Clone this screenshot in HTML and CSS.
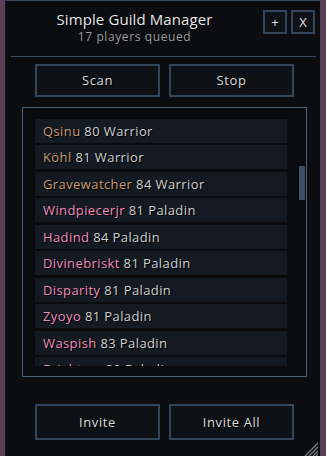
FILE: index.html
```html
<!DOCTYPE html>
<html lang="en">
<head>
	<meta charset="UTF-8">
	<title>Simple Guild Manager</title>
	<link rel="stylesheet" href="styles.css">
</head>
<body>
	<div class="window">
		<div class="header">
			<div class="titles">
				<div class="title">Simple Guild Manager</div>
				<div class="subtitle">17 players queued</div>
			</div>
			<div class="tools">
				<div class="tool">+</div>
				<div class="tool">X</div>
			</div>
		</div>
		<div class="sep"></div>
		<div class="actions top">
			<div class="btn">Scan</div>
			<div class="btn">Stop</div>
		</div>
		<div class="list">
			<div class="rows">
				<div class="row"><span class="warrior">Qsinu</span> 80 Warrior</div>
				<div class="row"><span class="warrior">Köhl</span> 81 Warrior</div>
				<div class="row"><span class="warrior">Gravewatcher</span> 84 Warrior</div>
				<div class="row"><span class="paladin">Windpiecerjr</span> 81 Paladin</div>
				<div class="row"><span class="paladin">Hadind</span> 84 Paladin</div>
				<div class="row"><span class="paladin">Divinebriskt</span> 81 Paladin</div>
				<div class="row"><span class="paladin">Disparity</span> 81 Paladin</div>
				<div class="row"><span class="paladin">Zyoyo</span> 81 Paladin</div>
				<div class="row"><span class="paladin">Waspish</span> 83 Paladin</div>
				<div class="row"><span class="paladin">Brightorr</span> 80 Paladin</div>
			</div>
			<div class="scrollbar">
				<div class="thumb"></div>
			</div>
		</div>
		<div class="actions bottom">
			<div class="btn">Invite</div>
			<div class="btn">Invite All</div>
		</div>
		<svg class="grip" width="14" height="18" viewBox="0 0 14 18">
			<line x1="1" y1="18" x2="14" y2="5" stroke="#7d7f84" stroke-width="1.3"/>
			<line x1="5" y1="18" x2="14" y2="9" stroke="#7d7f84" stroke-width="1.3"/>
			<line x1="9" y1="18" x2="14" y2="13" stroke="#7d7f84" stroke-width="1.3"/>
			<line x1="12" y1="18" x2="14" y2="16" stroke="#7d7f84" stroke-width="1.3"/>
		</svg>
	</div>
</body>
</html>
```

FILE: styles.css
```css
*{
	margin: 0;
	padding: 0;
	box-sizing: border-box;
}
body{
	background: #5b3f57;
	font-family: "Open Sans", "DejaVu Sans", sans-serif;
	color: #d6d6d6;
	overflow: hidden;
}
.window{
	position: relative;
	width: 315px;
	height: 456px;
	margin-left: 5px;
	background: #0c0d11;
	border-top: 1px solid #3a4858;
	border-left: 1px solid #17191e;
	display: flex;
	flex-direction: column;
}
.header{
	display: flex;
	padding: 9px 5px 0 0;
}
.titles{
	flex: 1;
	text-align: center;
}
.title{
	font-size: 15px;
	line-height: 19px;
	color: #e6e6e6;
	letter-spacing: 0.1px;
	text-shadow: 1px 1px 0 #000;
}
.subtitle{
	font-size: 12px;
	line-height: 16px;
	color: #9b9b9b;
	letter-spacing: 0.6px;
}
.tools{
	display: flex;
	gap: 4px;
}
.tool{
	width: 24px;
	height: 24px;
	border: 2px solid #33455a;
	background: #0e1116;
	font-size: 13px;
	line-height: 20px;
	text-align: center;
	color: #e0e0e0;
}
.sep{
	height: 1px;
	margin: 11px 4px 0 5px;
	background: #3a4a5c;
}
.actions{
	display: flex;
	gap: 9px;
	padding-left: 29px;
}
.actions.top{
	margin-top: 7px;
}
.actions.bottom{
	margin-top: 27px;
}
.btn{
	width: 125px;
	height: 33px;
	border: 2px solid #33455a;
	background: #0e1116;
	font-size: 13px;
	line-height: 29px;
	text-align: center;
	color: #dcdcdc;
	letter-spacing: 0.6px;
	text-shadow: 1px 1px 0 #000;
}
.bottom .btn{
	height: 36px;
	line-height: 32px;
}
.list{
	display: flex;
	width: 285px;
	height: 270px;
	margin: 10px 0 0 16px;
	border: 1px solid #4d627a;
	background: #0a0b0e;
	padding: 11px 1px 10px 12px;
}
.rows{
	width: 252px;
	height: 247px;
	overflow: hidden;
}
.row{
	height: 24px;
	margin-bottom: 2.45px;
	background: #141a22;
	padding-left: 8px;
	font-size: 13px;
	line-height: 24px;
	letter-spacing: 0.4px;
	color: #cfcfcf;
	text-shadow: 1px 1px 0 #000;
	white-space: nowrap;
}
.warrior{
	color: #c99c6c;
}
.paladin{
	color: #f08cba;
}
.scrollbar{
	width: 6px;
	margin-left: 12px;
}
.thumb{
	height: 34px;
	margin-top: 47px;
	background: #3a4f66;
}
.grip{
	position: absolute;
	right: 2px;
	bottom: 0;
}
```
